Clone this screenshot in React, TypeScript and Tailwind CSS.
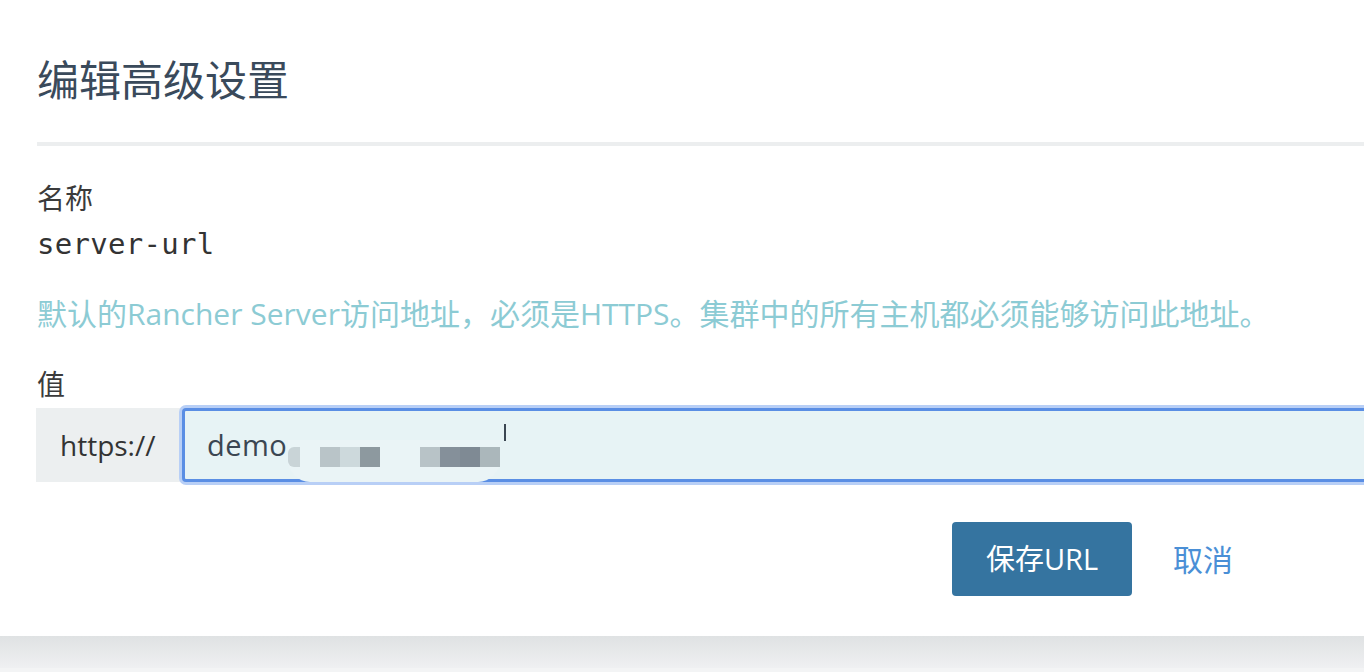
export default function App() {
  return (
    <div className="flex h-[672px] w-[1364px] flex-col overflow-hidden bg-[#eff0f2] font-['Open_Sans','Noto_Sans_CJK_SC',sans-serif]">
      <div className="h-[636px] shrink-0 bg-white pl-[37px]">
        <h1 className="pt-[58px] text-[42px] leading-[44px] font-normal text-[#3a4a5b]">编辑高级设置</h1>
        <div className="mt-[40px] h-[4px] w-[1400px] bg-[#eceeef]" />

        <div className="mt-[34px] text-[28px] leading-[36px] text-[#3b3b3b]">名称</div>
        <div className="mt-[10px] font-['DejaVu_Sans_Mono',monospace] text-[29px] leading-[36px] tracking-[0.3px] text-[#333]">
          server-url
        </div>

        <p className="mt-[32px] text-[30px] leading-[40px] text-[#8ccbd4]">
          默认的Rancher Server访问地址，必须是HTTPS。集群中的所有主机都必须能够访问此地址。
        </p>

        <div className="mt-[32px] text-[28px] leading-[36px] text-[#3b3b3b]">值</div>
        <div className="mt-[6px] flex h-[74px] -ml-px">
          <div className="flex w-[146px] shrink-0 items-center bg-[#eceff0] pl-[24px] text-[28px] text-[#333]">
            https://
          </div>
          <div className="relative flex w-[1220px] shrink-0 items-center rounded-[4px] border-[3px] border-[#5a8ee4] bg-[#e7f3f5] pl-[22px] text-[29px] text-[#3b4652] ring-[3px] ring-[#b8cff6]">
            <span className="tracking-[0.5px]">demo</span>
            <div className="absolute top-[29px] left-[103px] flex h-[42px] w-[212px] items-start rounded-b-[22px] bg-[#eaf4f6] pt-[7px]">
              <div className="h-[20px] w-[12px] rounded-l-[6px] bg-[#c9d4d7]" />
              <div className="ml-[20px] h-[20px] w-[20px] bg-[#b9c4c8]" />
              <div className="h-[20px] w-[20px] bg-[#cdd9dc]" />
              <div className="h-[20px] w-[20px] bg-[#8d999f]" />
              <div className="ml-[40px] h-[20px] w-[20px] bg-[#b8c3c7]" />
              <div className="h-[20px] w-[20px] bg-[#85909a]" />
              <div className="h-[20px] w-[20px] bg-[#7f8a94]" />
              <div className="h-[20px] w-[20px] bg-[#abb7bb]" />
            </div>
            <div className="absolute top-[13px] left-[319px] h-[17px] w-[1.5px] bg-[#3b4652]" />
          </div>
        </div>

        <div className="mt-[40px] flex items-center pl-[915px]">
          <button className="h-[74px] w-[180px] rounded-[4px] bg-[#3574a0] text-[29px] text-white">保存URL</button>
          <button className="ml-[41px] text-[30px] text-[#4a8fd6]">取消</button>
        </div>
      </div>
      <div className="h-[32px] shrink-0 bg-gradient-to-b from-[#dfe2e3] to-[#eff0f2]" />
      <div className="h-[4px] shrink-0 bg-[#f3f4f5]" />
    </div>
  )
}
